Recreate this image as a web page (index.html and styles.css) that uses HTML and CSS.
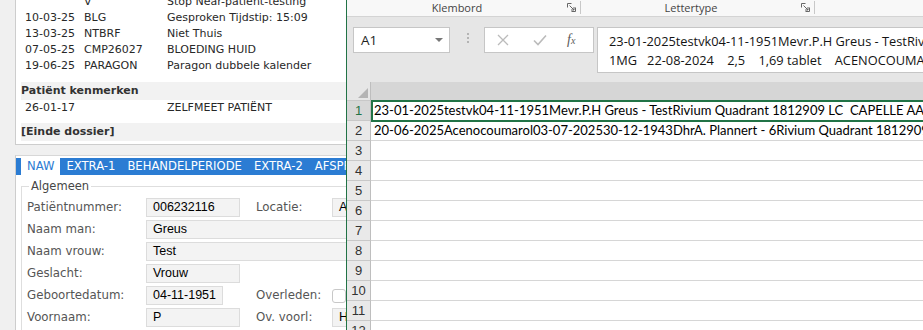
FILE: index.html
```html
<!DOCTYPE html>
<html>
    <head>
        <meta charset="UTF-8">
        <title>Dossier en Excel</title>

        <link rel="stylesheet" href="styles.css">
    </head>

    <body>
        <div class="screen">

            <!-- patient dossier window -->
            <div class="dossier-pane">
                <div class="dossier">
                    <div class="entries">
                        <div class="entry"><span class="date"></span><span class="code">V</span><span class="desc">Stop Near-patient-testing</span></div>
                        <div class="entry"><span class="date">10-03-25</span><span class="code">BLG</span><span class="desc">Gesproken Tijdstip: 15:09</span></div>
                        <div class="entry"><span class="date">13-03-25</span><span class="code">NTBRF</span><span class="desc">Niet Thuis</span></div>
                        <div class="entry"><span class="date">07-05-25</span><span class="code">CMP26027</span><span class="desc">BLOEDING HUID</span></div>
                        <div class="entry"><span class="date">19-06-25</span><span class="code">PARAGON</span><span class="desc">Paragon dubbele kalender</span></div>
                    </div>
                    <div class="section-head">Patiënt kenmerken</div>
                    <div class="entry kenmerk"><span class="date">26-01-17</span><span class="code"></span><span class="desc">ZELFMEET PATIËNT</span></div>
                    <div class="section-head einde">[Einde dossier]</div>
                </div>

                <div class="tabs-box">
                    <div class="tabbar">
                        <span class="tab active">NAW</span>
                        <span class="tab">EXTRA-1</span>
                        <span class="tab">BEHANDELPERIODE</span>
                        <span class="tab">EXTRA-2</span>
                        <span class="tab">AFSPRAKEN</span>
                    </div>
                    <div class="tab-body">
                        <fieldset class="group">
                            <legend>Algemeen</legend>
                            <div class="form-grid">
                                <span class="lbl">Patiëntnummer:</span>
                                <span class="field">006232116</span>
                                <span class="lbl second">Locatie:</span>
                                <span class="field wide-2">ASSEN</span>

                                <span class="lbl">Naam man:</span>
                                <span class="field span-all">Greus</span>

                                <span class="lbl">Naam vrouw:</span>
                                <span class="field span-all">Test</span>

                                <span class="lbl">Geslacht:</span>
                                <span class="field">Vrouw</span>
                                <span class="blank"></span>

                                <span class="lbl">Geboortedatum:</span>
                                <span class="field short">04-11-1951</span>
                                <span class="lbl second">Overleden:</span>
                                <span class="check-cell"><span class="checkbox"></span></span>

                                <span class="lbl">Voornaam:</span>
                                <span class="field">P</span>
                                <span class="lbl second">Ov. voorl:</span>
                                <span class="field wide-2">H</span>
                            </div>
                        </fieldset>
                    </div>
                </div>
            </div>

            <!-- excel window -->
            <div class="excel">
                <div class="ribbon">
                    <div class="rgroup">
                        <span class="rlabel">Klembord</span>
                        <svg class="launcher" width="9" height="9" viewBox="0 0 9 9"><path d="M0.5 4.5V0.5H4.5M8.5 4.5V8.5H4.5M2.5 2.5L7 7M4 7H7V4" stroke="#666" fill="none"/></svg>
                    </div>
                    <div class="rgroup">
                        <span class="rlabel">Lettertype</span>
                        <svg class="launcher" width="9" height="9" viewBox="0 0 9 9"><path d="M0.5 4.5V0.5H4.5M8.5 4.5V8.5H4.5M2.5 2.5L7 7M4 7H7V4" stroke="#666" fill="none"/></svg>
                    </div>
                </div>

                <div class="formula-area">
                    <div class="namebox">
                        <span>A1</span>
                        <svg width="8" height="5" viewBox="0 0 8 5"><path d="M0 0H8L4 4Z" fill="#777"/></svg>
                    </div>
                    <div class="grip"><i></i><i></i><i></i></div>
                    <div class="fx-buttons">
                        <svg width="12" height="12" viewBox="0 0 12 12"><path d="M1 1L11 11M11 1L1 11" stroke="#bbb" stroke-width="1.3" fill="none"/></svg>
                        <svg width="14" height="12" viewBox="0 0 14 12"><path d="M1 6.5L5 10.5L13 1.5" stroke="#bbb" stroke-width="1.6" fill="none"/></svg>
                        <span class="fx">f<small>x</small></span>
                    </div>
                    <div class="formula-text">
                        <div class="fline">23-01-2025testvk04-11-1951Mevr.P.H Greus - TestRivium Quadrant 1812909 LC  CAPELLE AAN DEN IJSSEL</div>
                        <div class="fline">1MG   22-08-2024    2,5    1,69 tablet    ACENOCOUMAROL</div>
                    </div>
                </div>

                <div class="sheet">
                    <div class="row col-heads">
                        <div class="rowhead corner"><span class="tri"></span></div>
                        <div class="cell colhead"></div>
                    </div>
                    <div class="row">
                        <div class="rowhead selected">1</div>
                        <div class="cell active">23-01-2025testvk04-11-1951Mevr.P.H Greus - TestRivium Quadrant 1812909 LC  CAPELLE AAN DEN IJSSEL  Apotheek</div>
                    </div>
                    <div class="row">
                        <div class="rowhead">2</div>
                        <div class="cell">20-06-2025Acenocoumarol03-07-202530-12-1943DhrA. Plannert - 6Rivium Quadrant 1812909 LC  CAPELLE AAN DEN IJSSEL</div>
                    </div>
                    <div class="row"><div class="rowhead">3</div><div class="cell"></div></div>
                    <div class="row"><div class="rowhead">4</div><div class="cell"></div></div>
                    <div class="row"><div class="rowhead">5</div><div class="cell"></div></div>
                    <div class="row"><div class="rowhead">6</div><div class="cell"></div></div>
                    <div class="row"><div class="rowhead">7</div><div class="cell"></div></div>
                    <div class="row"><div class="rowhead">8</div><div class="cell"></div></div>
                    <div class="row"><div class="rowhead">9</div><div class="cell"></div></div>
                    <div class="row"><div class="rowhead">10</div><div class="cell"></div></div>
                    <div class="row"><div class="rowhead">11</div><div class="cell"></div></div>
                    <div class="row"><div class="rowhead">12</div><div class="cell"></div></div>
                </div>
            </div>

        </div>
    </body>
</html>
```

FILE: styles.css
```css
body {
    margin: 0;
    background-color: rgb(240, 240, 240);
    overflow: hidden;
}

.screen {
    display: flex;
    height: 330px;
    overflow: hidden;
}

/* ---------- dossier window ---------- */

.dossier-pane {
    width: 346px;
    flex: none;
    overflow: hidden;
    font-family: "DejaVu Sans", Verdana, sans-serif;
    font-size: 11px;
    color: rgb(40, 40, 40);
    background-color: rgb(240, 240, 240);
}

.dossier {
    margin-left: 15px;
    width: 400px;
    background-color: rgb(255, 255, 255);
    border-left: 1px solid rgb(205, 205, 205);
    border-bottom: 1px solid rgb(205, 205, 205);
    padding: 0 0 3px 5px;
    overflow: hidden;
}

.entries {
    margin-top: -6px;
    padding-bottom: 8px;
}

.entry {
    display: flex;
    height: 16px;
    line-height: 16px;
    white-space: nowrap;
    padding-left: 4px;
}

.entry .date {
    width: 59px;
}

.entry .code {
    width: 83px;
}

.kenmerk {
    margin-bottom: 7px;
}

.section-head {
    height: 18px;
    line-height: 18px;
    font-weight: bold;
    background-color: rgb(242, 242, 242);
    color: rgb(50, 50, 50);
}

.tabs-box {
    margin: 10px 0 0 15px;
    width: 520px;
    border-left: 1px solid rgb(205, 205, 205);
    border-top: 1px solid rgb(215, 215, 215);
    padding-top: 2px;
    background-color: rgb(255, 255, 255);
    height: 200px;
}

.tabbar {
    display: flex;
    height: 17px;
    line-height: 17px;
    padding-left: 5px;
    background-color: rgb(43, 124, 211);
    font-size: 11.6px;
    white-space: nowrap;
}

.tab {
    padding: 0 6px;
    color: rgb(255, 255, 255);
}

.tab.active {
    background-color: rgb(255, 255, 255);
    color: rgb(43, 124, 211);
}

.tab-body {
    padding: 4px 0 0 5px;
}

.group {
    margin: 0;
    padding: 5px 0 10px 5px;
    border: 1px solid rgb(222, 222, 222);
    border-right: none;
}

.group legend {
    padding: 0 2px;
    margin-left: 2px;
    font-size: 11.5px;
    color: rgb(70, 70, 70);
}

.form-grid {
    display: grid;
    grid-template-columns: 119px 94px 92px auto;
    grid-auto-rows: 19px;
    row-gap: 3px;
    font-size: 11.8px;
    color: rgb(85, 85, 85);
}

.lbl {
    line-height: 19px;
    white-space: nowrap;
}

.lbl.second {
    padding-left: 16px;
}

.field {
    box-sizing: border-box;
    height: 19px;
    line-height: 17px;
    padding-left: 6px;
    border: 1px solid rgb(220, 220, 220);
    background-color: rgb(243, 243, 243);
    font-family: "Liberation Sans", Arial, sans-serif;
    font-size: 12.5px;
    color: rgb(0, 0, 0);
}

.field.short {
    width: 77px;
}

.field.span-all {
    grid-column: 2 / -1;
    width: 380px;
}

.field.wide-2 {
    width: 100px;
}

.blank {
    grid-column: 3 / -1;
}

.check-cell {
    display: flex;
    align-items: center;
}

.checkbox {
    width: 12px;
    height: 12px;
    border: 1px solid rgb(200, 200, 200);
    border-radius: 3px;
    background-color: rgb(255, 255, 255);
}

/* ---------- excel window ---------- */

.excel {
    flex: 1;
    min-width: 0;
    border-left: 1px solid rgb(33, 115, 70);
    background-color: rgb(230, 230, 230);
    font-family: "Open Sans", "Segoe UI", sans-serif;
    overflow: hidden;
}

.ribbon {
    display: flex;
    height: 16px;
    background-color: rgb(248, 248, 248);
    border-bottom: 1px solid rgb(212, 212, 212);
}

.rgroup {
    display: flex;
    align-items: center;
    width: 230px;
    height: 13px;
    margin-top: 1px;
    padding-right: 3px;
    border-right: 1px solid rgb(200, 200, 200);
}

.rlabel {
    flex: 1;
    text-align: center;
    font-size: 11px;
    line-height: 13px;
    color: rgb(68, 68, 68);
}

.launcher {
    margin-right: 1px;
}

.formula-area {
    display: flex;
    align-items: flex-start;
    padding: 10px 0 9px 6px;
}

.namebox {
    box-sizing: border-box;
    display: flex;
    align-items: center;
    justify-content: space-between;
    width: 97px;
    height: 26px;
    padding: 0 6px 0 7px;
    background-color: rgb(255, 255, 255);
    border: 1px solid rgb(198, 198, 198);
    font-size: 13.5px;
    color: rgb(30, 30, 30);
}

.grip {
    display: flex;
    flex-direction: column;
    gap: 2px;
    padding: 6px 15px 0 17px;
}

.grip i {
    width: 2px;
    height: 2px;
    background-color: rgb(180, 180, 180);
}

.fx-buttons {
    box-sizing: border-box;
    display: flex;
    align-items: center;
    width: 110px;
    height: 26px;
    padding-left: 12px;
    gap: 24px;
    background-color: rgb(255, 255, 255);
    border: 1px solid rgb(198, 198, 198);
}

.fx {
    font-family: "Liberation Serif", serif;
    font-style: italic;
    font-size: 14px;
    color: rgb(90, 90, 90);
    margin-left: -4px;
}

.fx small {
    font-size: 10px;
}

.formula-text {
    box-sizing: border-box;
    flex: 1;
    min-width: 0;
    height: 46px;
    margin-left: 3px;
    padding: 4px 0 0 11px;
    background-color: rgb(255, 255, 255);
    border: 1px solid rgb(198, 198, 198);
    border-right: none;
    font-size: 12.8px;
    line-height: 19px;
    color: rgb(20, 20, 20);
    overflow: hidden;
}

.fline {
    white-space: pre;
}

.sheet {
    background-color: rgb(255, 255, 255);
}

.row {
    display: flex;
    height: 20px;
}

.rowhead {
    box-sizing: border-box;
    width: 24px;
    flex: none;
    text-align: center;
    line-height: 19px;
    font-family: "Liberation Sans", Arial, sans-serif;
    font-size: 13px;
    color: rgb(50, 50, 50);
    background-color: rgb(233, 233, 233);
    border-right: 1px solid rgb(190, 190, 190);
    border-bottom: 1px solid rgb(200, 200, 200);
}

.rowhead.selected {
    background-color: rgb(215, 215, 215);
    color: rgb(33, 115, 70);
}

.cell {
    box-sizing: border-box;
    flex: 1;
    min-width: 0;
    padding-left: 3px;
    line-height: 19px;
    font-family: Lato, "Liberation Sans", sans-serif;
    font-size: 13px;
    color: rgb(0, 0, 0);
    white-space: pre;
    overflow: hidden;
    border-bottom: 1px solid rgb(214, 214, 214);
}

.col-heads {
    height: 19px;
}

.corner {
    position: relative;
    background-color: rgb(230, 230, 230);
}

.tri {
    position: absolute;
    right: 2px;
    bottom: 2px;
    width: 0;
    height: 0;
    border-left: 10px solid transparent;
    border-bottom: 10px solid rgb(180, 180, 180);
}

.colhead {
    background-color: rgb(214, 214, 214);
    border-bottom: none;
}

.cell.active {
    border: 2px solid rgb(33, 115, 70);
    border-right: none;
    line-height: 17px;
    padding-left: 1px;
    height: 22px;
    margin-top: -1px;
}
```
